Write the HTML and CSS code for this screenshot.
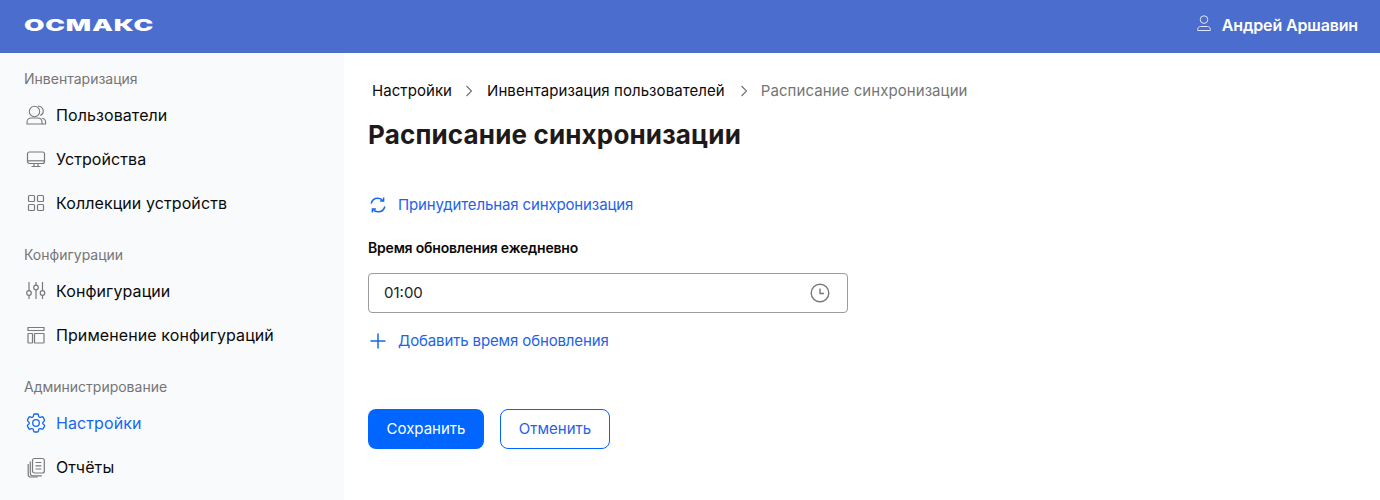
FILE: index.html
```html
<!DOCTYPE html>
<html lang="ru">
<head>
<meta charset="utf-8">
<title>Расписание синхронизации</title>
<link rel="stylesheet" href="styles.css">
</head>
<body>
<header class="topbar">
  <span class="logo">ОСМАКС</span>
  <div class="user">
    <svg class="user-icon" width="14" height="16" viewBox="0 0 14 16" fill="none" stroke="currentColor" stroke-width="1"><circle cx="7" cy="4.600" r="3.800"/><path d="M.7 15.500v-1.200c0-1.600 1.200-2.800 2.800-2.800h7c1.600 0 2.800 1.200 2.800 2.800v1.200z"/></svg>
    <span>Андрей Аршавин</span>
  </div>
</header>
<div class="layout">
  <nav class="sidebar">
    <div class="group-title">Инвентаризация</div>
    <a class="item"><svg width="24" height="24" viewBox="0 0 24 24" fill="none" stroke="#7a7a7a" stroke-width="1.100"><circle cx="10.500" cy="8.500" r="5.200"/><path d="M13.800 3.300c3-.5 5.500 1.700 5.500 4.700 0 2.200-1.200 3.800-3 4.600"/><path d="M3 21v-1.800c0-2.400 1.800-4.200 4-4.200h7c2.400 0 4 1.800 4 4.200V21z"/><path d="M18.200 15.200c2 .3 3.400 1.900 3.400 4V21h-3.600"/></svg><span>Пользователи</span></a>
    <a class="item"><svg width="24" height="24" viewBox="0 0 24 24" fill="none" stroke="#7a7a7a" stroke-width="1.200"><rect x="3.500" y="5" width="17" height="11.500" rx="2"/><path d="M3.500 13.800h17"/><path d="M10 16.500v3M14 16.500v3M7.500 19.500h9"/></svg><span>Устройства</span></a>
    <a class="item"><svg width="24" height="24" viewBox="0 0 24 24" fill="none" stroke="#7a7a7a" stroke-width="1.200"><rect x="4.500" y="4.500" width="6" height="6" rx="1"/><rect x="13.500" y="4.500" width="6" height="6" rx="1"/><rect x="4.500" y="13.500" width="6" height="6" rx="1"/><rect x="13.500" y="13.500" width="6" height="6" rx="1"/></svg><span>Коллекции устройств</span></a>

    <div class="group-title second">Конфигурации</div>
    <a class="item"><svg width="24" height="24" viewBox="0 0 24 24" fill="none" stroke="#7a7a7a" stroke-width="1.200"><circle cx="5" cy="14" r="2.300"/><circle cx="12" cy="8.500" r="2.300"/><circle cx="18.500" cy="14" r="2.300"/><path d="M5 3v8.700M5 16.300V20M12 3v3.200M12 10.800V20M18.500 3v8.700M18.500 16.300V20"/></svg><span>Конфигурации</span></a>
    <a class="item"><svg width="24" height="24" viewBox="0 0 24 24" fill="none" stroke="#7a7a7a" stroke-width="1.200"><path d="M4 4.500h16v3H4z"/><rect x="4" y="10.500" width="4.500" height="9.500" rx=".5"/><rect x="10.500" y="10.500" width="9.500" height="9.500" rx=".5"/></svg><span>Применение конфигураций</span></a>

    <div class="group-title second">Администрирование</div>
    <a class="item active"><svg width="24" height="24" viewBox="0 0 24 24" fill="none" stroke="#1668f0" stroke-width="1.300"><circle cx="12" cy="12" r="3.300"/><path d="M9.594 3.940c.09-.542.56-.94 1.110-.94h2.593c.55 0 1.020.398 1.110.94l.213 1.281c.063.374.313.686.645.870.074.040.147.083.22.127.325.196.72.257 1.075.124l1.217-.456a1.125 1.125 0 0 1 1.370.49l1.296 2.247a1.125 1.125 0 0 1-.26 1.431l-1.003.827c-.293.241-.438.613-.43.992a7.723 7.723 0 0 1 0 .255c-.008.378.137.75.43.991l1.004.827c.424.35.534.955.26 1.430l-1.298 2.247a1.125 1.125 0 0 1-1.369.491l-1.217-.456c-.355-.133-.75-.072-1.076.124a6.470 6.470 0 0 1-.22.128c-.331.183-.581.495-.644.869l-.213 1.281c-.09.543-.56.94-1.110.94h-2.594c-.55 0-1.019-.398-1.110-.94l-.213-1.281c-.062-.374-.312-.686-.644-.87a6.520 6.520 0 0 1-.22-.127c-.325-.196-.72-.257-1.076-.124l-1.217.456a1.125 1.125 0 0 1-1.369-.49l-1.297-2.247a1.125 1.125 0 0 1 .26-1.431l1.004-.827c.292-.24.437-.613.43-.991a6.932 6.932 0 0 1 0-.255c.007-.38-.138-.751-.43-.992l-1.004-.827a1.125 1.125 0 0 1-.26-1.430l1.297-2.247a1.125 1.125 0 0 1 1.370-.491l1.216.456c.356.133.751.072 1.076-.124.072-.044.146-.086.22-.128.332-.183.582-.495.644-.869l.214-1.280Z"/></svg><span>Настройки</span></a>
    <a class="item"><svg width="24" height="24" viewBox="0 0 24 24" fill="none" stroke="#7a7a7a" stroke-width="1.200"><rect x="8.500" y="3.500" width="11.800" height="14.500" rx="2"/><path d="M11.500 7.500h5.800M11.500 10.800h5.800M11.500 14h5.800"/><path d="M6.300 6.500v11.800c0 1.500 1 2.500 2.500 2.500h9"/><path d="M4.200 9v10.500c0 1.500 1 2.500 2.500 2.500h7"/></svg><span>Отчёты</span></a>
  </nav>
  <main class="content">
    <div class="crumbs">
      <span>Настройки</span>
      <svg class="chev" width="10" height="12" viewBox="0 0 10 12" fill="none" stroke="#6f6f6f" stroke-width="1.100"><path d="M2.500 1l5 5-5 5"/></svg>
      <span>Инвентаризация пользователей</span>
      <svg class="chev last" width="10" height="12" viewBox="0 0 10 12" fill="none" stroke="#6f6f6f" stroke-width="1.100"><path d="M2.500 1l5 5-5 5"/></svg>
      <span class="current">Расписание синхронизации</span>
    </div>
    <h1>Расписание синхронизации</h1>
    <a class="link sync"><svg width="20" height="20" viewBox="0 0 20 20" fill="none" stroke="#1668f0" stroke-width="1.500"><path d="M3.200 8.500C3.900 5.400 6.600 3.200 9.800 3.200c2.200 0 4 1 5.200 2.600"/><path d="M15.600 2.600v3.500h-3.500"/><path d="M16.800 11.500c-.7 3.100-3.400 5.300-6.600 5.300-2.200 0-4-1-5.200-2.600"/><path d="M4.400 17.400v-3.500h3.500"/></svg><span>Принудительная синхронизация</span></a>
    <label class="field-label">Время обновления ежедневно</label>
    <div class="time-input">
      <span class="time-value">01:00</span>
      <svg width="20" height="20" viewBox="0 0 20 20" fill="none" stroke="#7a7a7a" stroke-width="1.400"><circle cx="10" cy="10" r="8.800"/><path d="M10 5.500v5h4"/></svg>
    </div>
    <a class="link add"><svg width="20" height="20" viewBox="0 0 20 20" fill="none" stroke="#1668f0" stroke-width="1.500"><path d="M10 2.500v15M2.500 10h15"/></svg><span>Добавить время обновления</span></a>
    <div class="actions">
      <button class="btn primary">Сохранить</button>
      <button class="btn outline">Отменить</button>
    </div>
  </main>
</div>
</body>
</html>
```

FILE: styles.css
```css
* { box-sizing: border-box; }
html, body { margin: 0; height: 100%; overflow: hidden; }
body { font-family: Inter, "Noto Sans", sans-serif; background: #fff; color: #111; }

.topbar {
  height: 53px;
  background: #4a6dce;
  display: flex;
  align-items: center;
  justify-content: space-between;
  padding: 0 22px 3px 24px;
  color: #fff;
}
.logo {
  font-weight: 900;
  font-size: 16px;
  line-height: 16px;
  letter-spacing: 0.5px;
  transform: scaleX(1.65);
  transform-origin: left center;
}
.user { display: flex; align-items: center; gap: 11px; font-size: 16px; font-weight: 600; letter-spacing: -0.15px; }
.user-icon { color: #dfe6f7; margin: -4px 0 0; }

.layout { display: flex; height: 447px; }
.sidebar { width: 344px; background: #f9fafc; padding: 16px 0 0 24px; }
.group-title { font-size: 14px; line-height: 20px; color: #757575; font-weight: 400; height: 20px; margin-bottom: 4px; }
.group-title.second { margin-top: 20px; }
.item { display: flex; align-items: center; gap: 8px; height: 44px; font-size: 16px; font-weight: 400; letter-spacing: 0.09px; color: #0a0a0a; }
.item svg { flex: none; }
.item.active { color: #1668f0; }

.content { flex: 1; padding: 27px 24px 0; }
.crumbs { display: flex; align-items: center; font-size: 15px; line-height: 22px; padding-left: 4px; letter-spacing: 0.07px; color: #0a0a0a; height: 22px; }
.chev { margin: 0 13px 0 12px; }
.chev.last { margin-left: 14px; margin-right: 12px; }
.current { color: #757575; }
h1 { margin: 16px 0 0; font-size: 26px; line-height: 34px; font-weight: 700; letter-spacing: 0.16px; color: #1f1a1a; }

.link { display: flex; align-items: center; gap: 10px; color: #1d63e8; font-size: 15px; line-height: 20px; letter-spacing: -0.13px; }
.sync { margin-top: 43px; }
.field-label { display: block; margin-top: 23px; font-size: 14px; line-height: 20px; font-weight: 600; letter-spacing: -0.2px; color: #0a0a0a; }
.time-input {
  margin-top: 15px;
  width: 480px;
  height: 40px;
  border: 1px solid #9c9c9c;
  border-radius: 4px;
  display: flex;
  align-items: center;
  justify-content: space-between;
  padding: 0 17px 0 15px;
  font-size: 15px;
  color: #222;
}
.time-value { margin-top: -2px; }
.add { margin-top: 18px; }
.actions { display: flex; gap: 16px; margin-top: 58px; }
.btn { height: 40px; border-radius: 8px; font-family: inherit; font-size: 15px; font-weight: 400; padding: 0 0 2px; }
.primary { width: 116px; background: #0066ff; color: #fff; border: none; }
.outline { width: 110px; background: #fff; color: #1d63e8; border: 1px solid #0066ff; }
```
